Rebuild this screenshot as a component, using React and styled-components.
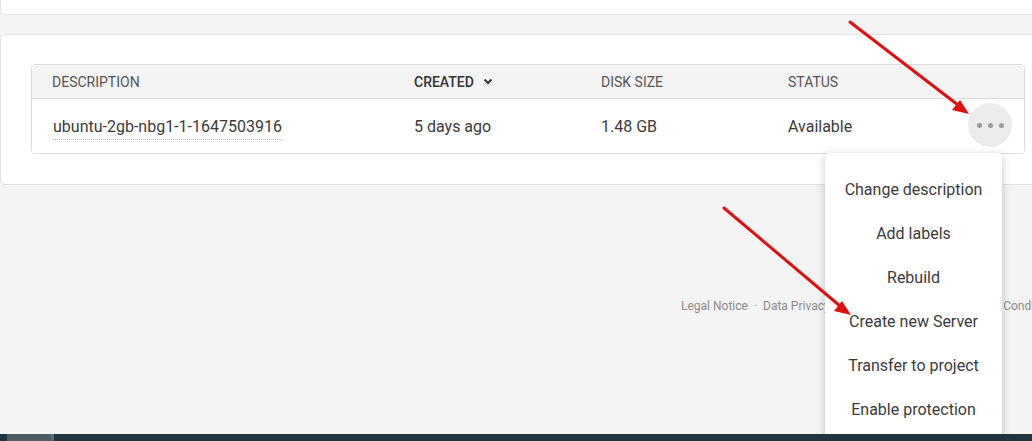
import React from "react";
import styled, { createGlobalStyle } from "styled-components";

const Global = createGlobalStyle`
  html, body { margin: 0; padding: 0; background: #f4f4f4; overflow: hidden; }
  body { font-family: Roboto, "Noto Sans", Arial, sans-serif; color: #333; }
  #root { position: relative; width: 1032px; height: 441px; overflow: hidden; }
`;

const Page = styled.div`
  width: 1040px;
  display: flex;
  flex-direction: column;
`;

const TopCard = styled.div`
  height: 14px;
  background: #fff;
  border: 1px solid #e2e2e2;
  border-top: none;
  border-radius: 0 0 5px 5px;
  margin-bottom: 19px;
`;

const Card = styled.section`
  background: #fff;
  border: 1px solid #e2e2e2;
  border-radius: 5px;
  padding: 29px 16px 30px 30px;
`;

const Table = styled.div`
  width: 992px;
  border: 1px solid #dcdcdc;
  border-radius: 4px;
  overflow: hidden;
`;

const Row = styled.div`
  display: grid;
  grid-template-columns: 362px 187px 187px 1fr 44px;
  align-items: center;
  padding: 0 11px 0 20px;
  height: ${(p) => (p.$head ? "33px" : "54px")};
  background: ${(p) => (p.$head ? "#f4f4f4" : "#fff")};
  border-bottom: ${(p) => (p.$head ? "1px solid #dcdcdc" : "none")};
`;

const Th = styled.div`
  font-size: 14px;
  text-transform: uppercase;
  color: ${(p) => (p.$active ? "#333" : "#555")};
  font-weight: ${(p) => (p.$active ? 500 : 400)};
  display: flex;
  align-items: center;
  gap: 9px;
`;

const Td = styled.div`
  font-size: 16px;
  color: #3a3a3a;
  padding-top: 1px;
`;

const Desc = styled.span`
  display: inline-block;
  font-size: 16px;
  color: #3a3a3a;
  border-bottom: 1px dotted #aaa;
  padding-bottom: 3px;
  margin-top: 5px;
  margin-left: 1px;
`;

const DotsButton = styled.button`
  width: 44px;
  height: 44px;
  border-radius: 50%;
  background: #ebebeb;
  border: none;
  padding: 0;
  display: flex;
  align-items: center;
  justify-content: center;
  gap: 6px;
  margin-top: -2px;
  margin-left: -1px;
`;

const Dot = styled.span`
  width: 5px;
  height: 5px;
  border-radius: 50%;
  background: #9a9a9a;
`;

const Footer = styled.footer`
  display: flex;
  gap: 6px;
  padding: 114px 0 0 681px;
  font-size: 12px;
  color: #8a8a8a;
  white-space: nowrap;
`;

const Sep = styled.span`
  color: #aaa;
`;

const Menu = styled.ul`
  position: absolute;
  left: 825px;
  top: 153px;
  width: 177px;
  margin: 0;
  padding: 14px 0 20px;
  list-style: none;
  background: #fff;
  border-radius: 4px;
  box-shadow: 0 2px 8px rgba(0, 0, 0, 0.22);
  z-index: 5;
`;

const MenuItem = styled.li`
  height: 44px;
  display: flex;
  align-items: center;
  justify-content: center;
  font-size: 16px;
  color: #3a3a3a;
  white-space: nowrap;
`;

const Taskbar = styled.div`
  position: absolute;
  left: 0;
  right: 0;
  bottom: 0;
  height: 7px;
  background: #1f3540;
  display: flex;
  z-index: 10;
`;

const TaskButton = styled.div`
  margin-left: 7px;
  width: 44px;
  background: #4b5c63;
  border-right: 3px solid #5a6a70;
`;

const Arrows = styled.svg`
  position: absolute;
  left: 0;
  top: 0;
  pointer-events: none;
  z-index: 20;
`;

export default function App() {
  return (
    <>
      <Global />
      <Page>
        <TopCard />
        <Card>
          <Table>
            <Row $head>
              <Th>Description</Th>
              <Th $active>
                Created
                <svg width="10" height="7" viewBox="0 0 10 7">
                  <path d="M1.5 1.5 L5 5 L8.5 1.5" fill="none" stroke="#333" strokeWidth="2" />
                </svg>
              </Th>
              <Th>Disk size</Th>
              <Th>Status</Th>
              <div />
            </Row>
            <Row>
              <div>
                <Desc>ubuntu-2gb-nbg1-1-1647503916</Desc>
              </div>
              <Td>5 days ago</Td>
              <Td>1.48 GB</Td>
              <Td>Available</Td>
              <DotsButton aria-label="more">
                <Dot />
                <Dot />
                <Dot />
              </DotsButton>
            </Row>
          </Table>
        </Card>
        <Footer>
          <span>Legal Notice</span>
          <Sep>·</Sep>
          <span>Data Privacy</span>
          <Sep>·</Sep>
          <span>Cookie Settings</span>
          <Sep>·</Sep>
          <span>Terms and Conditions</span>
        </Footer>
      </Page>
      <Menu>
        <MenuItem>Change description</MenuItem>
        <MenuItem>Add labels</MenuItem>
        <MenuItem>Rebuild</MenuItem>
        <MenuItem>Create new Server</MenuItem>
        <MenuItem>Transfer to project</MenuItem>
        <MenuItem>Enable protection</MenuItem>
      </Menu>
      <Taskbar>
        <TaskButton />
      </Taskbar>
      <Arrows width="1032" height="441" viewBox="0 0 1032 441">
        <line x1="850" y1="22" x2="958" y2="105" stroke="#e01010" strokeWidth="3" strokeLinecap="round" />
        <polygon points="969,114 952,110 960,100" fill="#e01010" />
        <line x1="724" y1="208" x2="840" y2="306" stroke="#e01010" strokeWidth="3" strokeLinecap="round" />
        <polygon points="851,315 834,311 842,301" fill="#e01010" />
      </Arrows>
    </>
  );
}
